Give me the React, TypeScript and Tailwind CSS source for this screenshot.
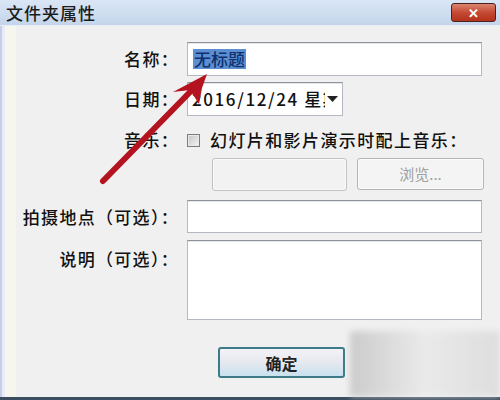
import { ReactNode } from "react";

const FONT = { fontFamily: '"Noto Sans CJK SC", "Noto Sans", sans-serif' };

function Label({ children, top }: { children: ReactNode; top?: boolean }) {
  return (
    <div
      className={`w-[163px] shrink-0 whitespace-nowrap text-right text-[17px] font-medium tracking-[1.3px] text-[#111] ${
        top ? "pt-[6px]" : ""
      }`}
    >
      {children}
    </div>
  );
}

function Box({ className, children }: { className?: string; children?: ReactNode }) {
  return (
    <div
      className={`border border-[#b4b8c0] border-t-[#8e939b] bg-white shadow-[inset_0_1px_0_#e4e6ea] ${className ?? ""}`}
    >
      {children}
    </div>
  );
}

function Arrow() {
  return (
    <svg
      className="pointer-events-none absolute left-0 top-0"
      width="500"
      height="400"
      viewBox="0 0 500 400"
    >
      <line x1="103" y1="181" x2="192" y2="90" stroke="#b3141f" strokeWidth="6" strokeLinecap="round" />
      <polygon points="207,74 173,92 190,90 199,104 202,88" fill="#b3141f" />
    </svg>
  );
}

export default function App() {
  return (
    <div className="relative h-[400px] w-[500px] overflow-hidden bg-[#f0f0f0]" style={FONT}>
      {/* title bar */}
      <div className="flex h-[26px] items-center justify-between border-b border-[#e6eef8] bg-[linear-gradient(#dae6f5,#c4d5eb)] pl-[6px] pr-[4px]">
        <span className="text-[17px] font-medium tracking-[1px] text-[#1b1b1b]">文件夹属性</span>
        <div className="flex h-[19px] w-[45px] items-center justify-center rounded-[3px] border border-[#4a2020] bg-[linear-gradient(#dc8570,#c44a33_50%,#b3321c)] text-[13px] font-bold leading-none text-white">
          ✕
        </div>
      </div>

      <div className="flex h-[374px]">
        {/* left frame */}
        <div className="w-[5px] border-l-2 border-[#c6cdea] bg-[#e9ecf6]" />
        <div className="w-[11px] bg-[#f6f6ee]" />

        <div className="flex flex-1 flex-col pt-[16px]">
          {/* 名称 */}
          <div className="flex items-center gap-[8px]">
            <Label>名称：</Label>
            <Box className="flex h-[34px] w-[295px] items-center pl-[5px]">
              <span className="bg-[#5b8fd2] px-[1px] text-[17px] font-medium leading-[20px] text-[#10306e]">无标题</span>
            </Box>
          </div>

          {/* 日期 */}
          <div className="mt-[6px] flex items-center gap-[8px]">
            <Label>日期：</Label>
            <Box className="flex h-[34px] w-[156px] items-center overflow-hidden pl-[4px] pr-[4px]">
              <span className="flex-1 overflow-hidden whitespace-nowrap text-[17px] font-medium tracking-[1.6px] text-[#111]">
                2016/12/24 星期
              </span>
              <svg width="11" height="6" viewBox="0 0 11 6" className="ml-[2px] shrink-0">
                <polygon points="0,0 11,0 5.5,6" fill="#222" />
              </svg>
            </Box>
          </div>

          {/* 音乐 */}
          <div className="mt-[12px] flex h-[24px] items-center gap-[8px]">
            <Label>音乐：</Label>
            <div className="flex items-center gap-[10px]">
              <div className="h-[13px] w-[13px] border border-[#7c7c7c] bg-[linear-gradient(135deg,#c4c4c4,#f4f4f4)] shadow-[inset_0_0_0_1px_#e8e8e8]" />
              <span className="text-[17px] font-medium tracking-[1.4px] text-[#111]">幻灯片和影片演示时配上音乐：</span>
            </div>
          </div>

          <div className="mt-[6px] flex gap-[10px] pl-[196px]">
            <div className="h-[33px] w-[135px] rounded-[3px] border border-[#c2c2c2] bg-[#f2f2f2] shadow-[inset_0_0_0_1px_#fafafa]" />
            <div className="flex h-[32px] w-[127px] items-center justify-center rounded-[3px] border border-[#b5b5b5] bg-[#f4f4f4] text-[15px] text-[#a0a0a0] shadow-[inset_0_0_0_1px_#fbfbfb]">
              浏览...
            </div>
          </div>

          {/* 拍摄地点 */}
          <div className="mt-[9px] flex items-center gap-[8px]">
            <Label>拍摄地点（可选）：</Label>
            <Box className="h-[33px] w-[295px]" />
          </div>

          {/* 说明 */}
          <div className="mt-[7px] flex items-start gap-[8px]">
            <Label top>说明（可选）：</Label>
            <Box className="h-[80px] w-[295px]" />
          </div>

          <div className="mt-[27px] pl-[202px]">
            <div className="flex h-[31px] w-[127px] items-center justify-center rounded-[3px] border-2 border-[#3e7b88] bg-[linear-gradient(#f3f3f6,#e6e8ef_50%,#c8e2ef)] text-[16px] font-bold text-[#222]">
              确定
            </div>
          </div>
        </div>
      </div>

      {/* bottom frame */}
      <div className="absolute bottom-0 left-0 h-[3px] w-full bg-[#3b4d60]" />

      {/* watermark haze */}
      <div className="pointer-events-none absolute bottom-[3px] right-0 h-[66px] w-[150px] bg-[linear-gradient(90deg,#bdbdbd,#e8e8e8,#d6d6d6)] opacity-70 blur-[3px]" />

      <Arrow />
    </div>
  );
}
